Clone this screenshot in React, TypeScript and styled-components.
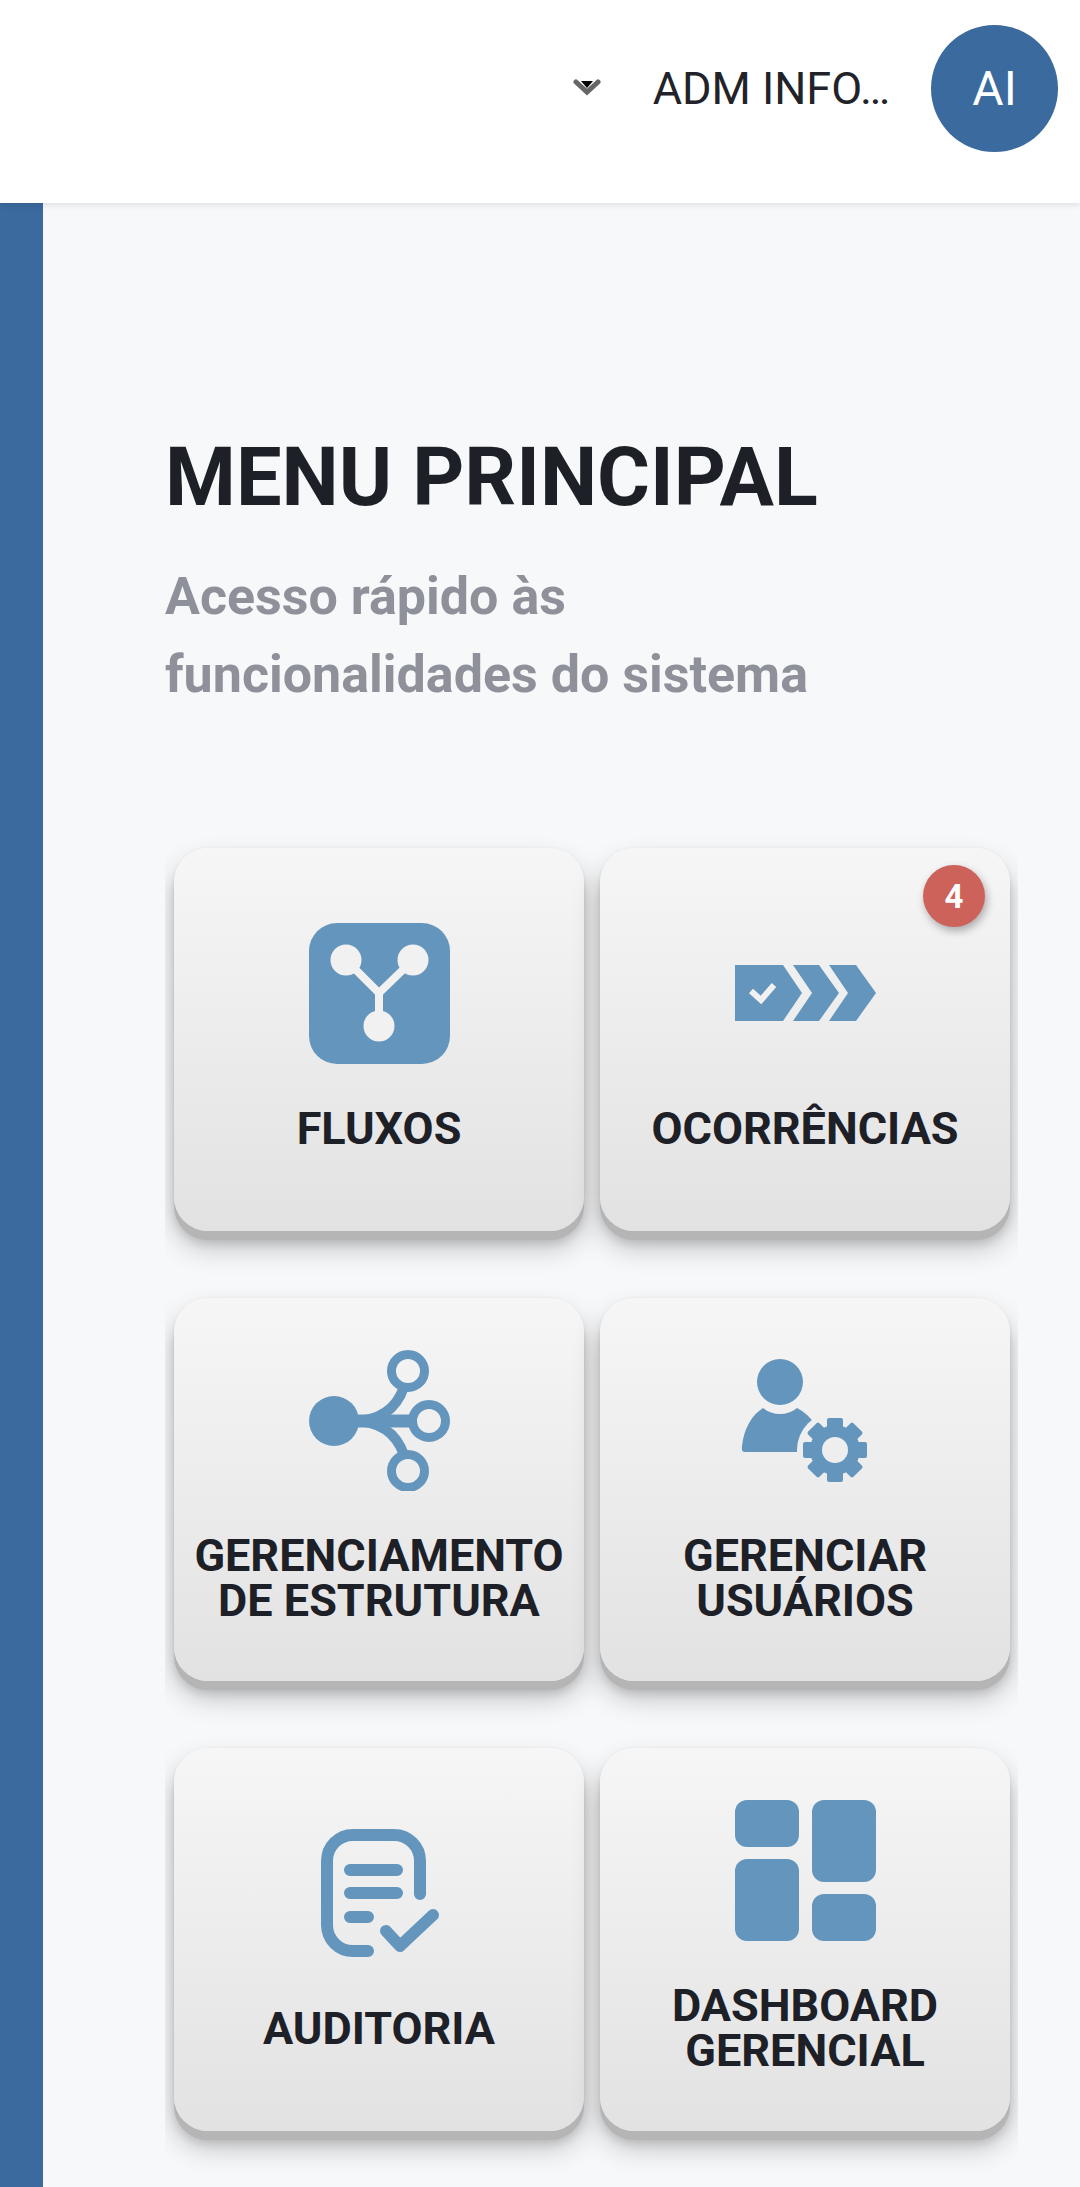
import React, { ReactElement, ReactNode } from "react";
import styled, { createGlobalStyle } from "styled-components";

const ICON = "#6496bd";
const CUT = "#f1f1f2";

const GlobalStyle = createGlobalStyle`
  html, body {
    margin: 0;
    padding: 0;
    background: #f7f8fa;
    font-family: Roboto, "Liberation Sans", sans-serif;
  }
  * {
    box-sizing: border-box;
  }
`;

const Page = styled.div`
  width: 1080px;
  height: 2187px;
  overflow: hidden;
  display: flex;
  flex-direction: column;
`;

const Header = styled.header`
  flex: 0 0 203px;
  background: #fff;
  display: flex;
  align-items: center;
  justify-content: flex-end;
  padding: 0 22px 26px 0;
  box-shadow: 0 2px 6px rgba(0, 0, 0, 0.1);
  position: relative;
  z-index: 1;
`;

const Caret = styled.svg`
  width: 28px;
  height: 18px;
  margin-right: 52px;
  margin-top: -4px;
`;

const UserName = styled.span`
  font-size: 45px;
  color: #212328;
  margin-right: 41px;
  white-space: nowrap;
`;

const Avatar = styled.div`
  width: 127px;
  height: 127px;
  border-radius: 50%;
  background: #3b6a9e;
  color: #fff;
  font-size: 48px;
  display: flex;
  align-items: center;
  justify-content: center;
`;

const Body = styled.div`
  flex: 1;
  display: flex;
  min-height: 0;
`;

const Sidebar = styled.aside`
  flex: 0 0 43px;
  background: #3b6a9e;
`;

const Main = styled.main`
  flex: 1;
  padding: 229px 62px 0 122px;
`;

const Title = styled.h1`
  margin: 0;
  font-size: 81px;
  line-height: 91px;
  font-weight: 700;
  color: #1d2026;
`;

const Subtitle = styled.p`
  margin: 35px 0 0;
  font-size: 52px;
  line-height: 78px;
  font-weight: 700;
  color: #8e9199;
  max-width: 720px;
`;

const Grid = styled.div`
  margin-top: 117px;
`;

const Row = styled.div`
  display: grid;
  grid-template-columns: 1fr 1fr;
  column-gap: 16px;
  padding: 17px 8px 50px 9px;
  overflow: hidden;
`;

const Card = styled.div`
  position: relative;
  height: 383px;
  border-radius: 34px;
  background: linear-gradient(180deg, #f6f6f7 0%, #e2e2e3 100%);
  box-shadow:
    0 9px 0 #b5b5b6,
    0 0 3px rgba(0, 0, 0, 0.06),
    0 12px 10px rgba(0, 0, 0, 0.12),
    0 16px 28px rgba(0, 0, 0, 0.24);
  display: flex;
  flex-direction: column;
  align-items: center;
  justify-content: center;
  gap: 42px;
  padding-bottom: 6px;
`;

const IconBox = styled.svg`
  width: 141px;
  height: 141px;
  flex: none;
`;

const Label = styled.div`
  font-size: 45px;
  line-height: 45px;
  font-weight: 700;
  color: #1d2026;
  text-align: center;
  white-space: pre-line;
`;

const Badge = styled.span`
  position: absolute;
  top: 17px;
  right: 25px;
  width: 62px;
  height: 62px;
  border-radius: 50%;
  background: #cc6259;
  color: #fff;
  font-size: 33px;
  font-weight: 700;
  display: flex;
  align-items: center;
  justify-content: center;
  box-shadow: 2px 4px 8px rgba(0, 0, 0, 0.3);
`;

const FluxosIcon = () => (
  <IconBox viewBox="0 0 141 141">
    <rect width="141" height="141" rx="28" fill={ICON} />
    <g stroke={CUT} strokeWidth="8" fill="none">
      <path d="M37 37 L70 70 L104 37 M70 70 V103" />
    </g>
    <g fill={CUT}>
      <circle cx="37" cy="37" r="15.5" />
      <circle cx="104" cy="37" r="15.5" />
      <circle cx="70" cy="103" r="15.5" />
    </g>
  </IconBox>
);

const OcorrenciasIcon = () => (
  <IconBox viewBox="0 0 141 141">
    <g transform="translate(0 42)">
      <path d="M0 0 H48 L67 28 L48 56 H0 Z" fill={ICON} />
      <path d="M58 0 H84 L104 28 L84 56 H58 L77 28 Z" fill={ICON} />
      <path d="M94 0 H121 L141 28 L121 56 H94 L113 28 Z" fill={ICON} />
      <path d="M16 26 L26 35 L39 20" fill="none" stroke={CUT} strokeWidth="6" />
    </g>
  </IconBox>
);

const EstruturaIcon = () => (
  <IconBox viewBox="0 0 141 141">
    <circle cx="25" cy="71" r="25" fill={ICON} />
    <g fill="none" stroke={ICON}>
      <path d="M40 71 H106" strokeWidth="13" />
      <path d="M44 71 C70 71 87 60 95 37" strokeWidth="10" />
      <path d="M44 71 C70 71 87 82 95 105" strokeWidth="10" />
      <circle cx="99" cy="21" r="16.5" strokeWidth="9" />
      <circle cx="120" cy="71" r="16.5" strokeWidth="9" />
      <circle cx="99" cy="121" r="16.5" strokeWidth="9" />
    </g>
  </IconBox>
);

const GEAR_ANGLES = [0, 45, 90, 135, 180, 225, 270, 315];

const UsuariosIcon = () => (
  <IconBox viewBox="0 0 141 141">
    <mask id="user-body">
      <rect width="141" height="141" fill="#fff" />
      <circle cx="100" cy="100" r="38" fill="#000" />
    </mask>
    <mask id="gear-hole">
      <rect width="141" height="141" fill="#fff" />
      <circle cx="100" cy="100" r="13" fill="#000" />
    </mask>
    <circle cx="45" cy="32" r="23" fill={ICON} />
    <path
      d="M10 102 Q6 102 7 96 C9 78 17 65 28 58 C38 66 52 66 62 58 Q72 63 80 74 V102 Z"
      fill={ICON}
      mask="url(#user-body)"
    />
    <g fill={ICON} mask="url(#gear-hole)">
      <circle cx="100" cy="100" r="25" />
      {GEAR_ANGLES.map((a) => (
        <rect
          key={a}
          x="92"
          y="68"
          width="16"
          height="16"
          rx="2"
          transform={`rotate(${a} 100 100)`}
        />
      ))}
    </g>
  </IconBox>
);

const AuditoriaIcon = () => (
  <IconBox viewBox="0 0 141 141">
    <g fill="none" stroke={ICON} strokeWidth="12" strokeLinecap="round" strokeLinejoin="round">
      <path d="M111 71 V38 A26 26 0 0 0 85 12 H44 A26 26 0 0 0 18 38 V102 A26 26 0 0 0 44 128 H59" />
      <path d="M41 47 H88 M41 70 H88 M41 94 H59" />
      <path d="M77 108 L91 123 L124 92" />
    </g>
  </IconBox>
);

const DashboardIcon = () => (
  <IconBox viewBox="0 0 141 141">
    <g fill={ICON}>
      <rect x="0" y="0" width="64" height="47" rx="12" />
      <rect x="0" y="59" width="64" height="82" rx="12" />
      <rect x="77" y="0" width="64" height="82" rx="12" />
      <rect x="77" y="94" width="64" height="47" rx="12" />
    </g>
  </IconBox>
);

interface MenuItem {
  label: string;
  icon: ReactNode;
  badge?: number;
}

const rows: MenuItem[][] = [
  [
    { label: "FLUXOS", icon: <FluxosIcon /> },
    { label: "OCORRÊNCIAS", icon: <OcorrenciasIcon />, badge: 4 },
  ],
  [
    { label: "GERENCIAMENTO\nDE ESTRUTURA", icon: <EstruturaIcon /> },
    { label: "GERENCIAR\nUSUÁRIOS", icon: <UsuariosIcon /> },
  ],
  [
    { label: "AUDITORIA", icon: <AuditoriaIcon /> },
    { label: "DASHBOARD\nGERENCIAL", icon: <DashboardIcon /> },
  ],
];

export default function App(): ReactElement {
  return (
    <Page>
      <GlobalStyle />
      <Header>
        <Caret viewBox="0 0 28 18">
          <path d="M3 4 L14 14 L25 4" fill="none" stroke="#666" strokeWidth="5" strokeLinecap="round" />
          <path d="M8 3 H20 L14 10 Z" fill="#000" />
        </Caret>
        <UserName>ADM INFO…</UserName>
        <Avatar>AI</Avatar>
      </Header>
      <Body>
        <Sidebar />
        <Main>
          <Title>MENU PRINCIPAL</Title>
          <Subtitle>Acesso rápido às funcionalidades do sistema</Subtitle>
          <Grid>
            {rows.map((row) => (
              <Row key={row[0].label}>
                {row.map((item) => (
                  <Card key={item.label}>
                    {item.badge !== undefined && <Badge>{item.badge}</Badge>}
                    {item.icon}
                    <Label>{item.label}</Label>
                  </Card>
                ))}
              </Row>
            ))}
          </Grid>
        </Main>
      </Body>
    </Page>
  );
}
